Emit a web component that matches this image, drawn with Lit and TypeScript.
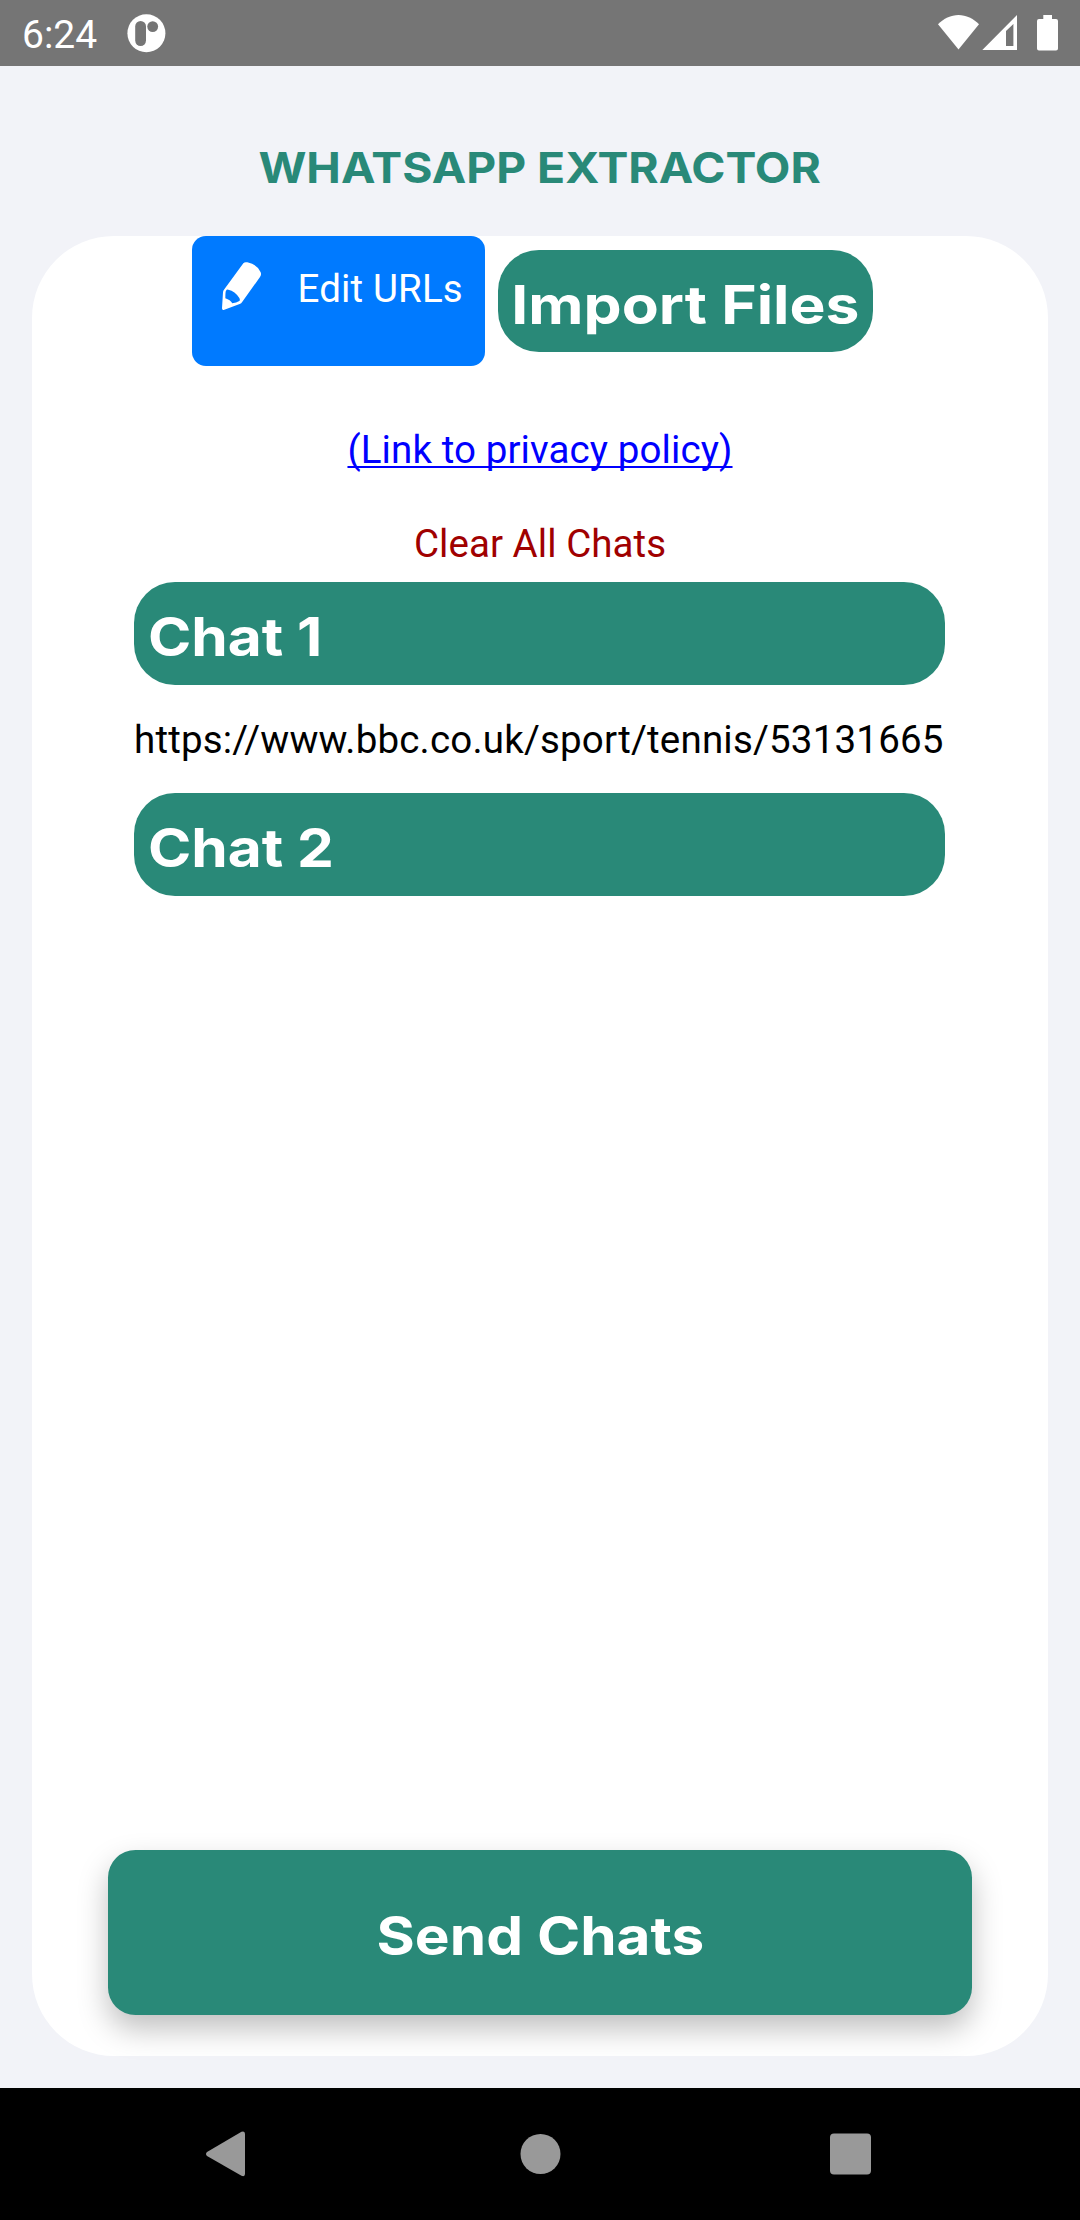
import { LitElement, html, css } from "lit";
import { customElement, property, state } from "lit/decorators.js";

interface Chat {
  name: string;
  urls: string[];
}

@customElement("status-bar")
class StatusBar extends LitElement {
  static styles = css`
    :host {
      display: flex;
      align-items: flex-start;
      justify-content: space-between;
      box-sizing: border-box;
      height: 66px;
      flex: none;
      background: #757575;
      color: #fff;
    }
    .left {
      display: flex;
      padding-left: 22px;
    }
    .time {
      width: 105px;
      padding-top: 12px;
      font: 39px/46px Roboto, sans-serif;
      white-space: nowrap;
    }
    .app {
      margin-top: 14px;
    }
    .icons {
      display: block;
    }
  `;
  render() {
    return html`
      <div class="left">
        <span class="time">6:24</span>
        <svg class="app" width="39" height="39" viewBox="0 0 39 39">
          <circle cx="19.4" cy="19.3" r="19" fill="#fff" />
          <rect x="8.2" y="7" width="10.8" height="25" rx="5.4" fill="#757575" />
          <circle cx="25.7" cy="12.6" r="5.4" fill="#757575" />
        </svg>
      </div>
      <svg class="icons" width="150" height="66" viewBox="930 0 150 66" fill="#fff">
        <path d="M958.5 49.5 938 24.3C943.500 18.500 951 15 958.500 15S973.500 18.500 979 24.300Z" />
        <path fill-rule="evenodd" d="M982.300 50 1017 15V50ZM1006 31V46H1013.400V24Z" />
        <path d="M1043.300 15H1052V19H1056Q1058 19 1058 21V48.500Q1058 50.500 1056 50.500H1039Q1037 50.500 1037 48.500V21Q1037 19 1039 19H1043.300Z" />
      </svg>
    `;
  }
}

@customElement("chat-item")
class ChatItem extends LitElement {
  @property({ attribute: false }) chat!: Chat;
  static styles = css`
    :host {
      display: block;
    }
    .name {
      box-sizing: border-box;
      height: 103px;
      padding: 23px 0 0 13.5px;
      border-radius: 41px;
      background: #298978;
      color: #fff;
      font: 700 53px/64px Inter, sans-serif;
      white-space: nowrap;
    }
    .name span {
      display: inline-block;
      transform: scaleX(1.105);
      transform-origin: left;
    }
    .url {
      padding: 32px 0 30px;
      color: #000;
      font: 38.5px/46px Roboto, sans-serif;
      letter-spacing: 0.19px;
      white-space: nowrap;
    }
  `;
  render() {
    return html`
      <div class="name"><span>${this.chat.name}</span></div>
      ${this.chat.urls.map((u) => html`<div class="url">${u}</div>`)}
    `;
  }
}

@customElement("nav-bar")
class NavBar extends LitElement {
  static styles = css`
    :host {
      display: flex;
      align-items: center;
      justify-content: space-between;
      box-sizing: border-box;
      height: 132px;
      flex: none;
      padding: 0 208px 0 205px;
      background: #000;
    }
    svg {
      overflow: visible;
    }
  `;
  render() {
    return html`
      <svg width="42" height="48" viewBox="0 0 42 48" fill="#999">
        <path d="M2 22 36.500 1.800Q40 0.500 40 4V44Q40 47 36.500 45.800L2 26Q0 24 2 22Z" />
      </svg>
      <svg width="42" height="42" viewBox="0 0 42 42" fill="#999"><circle cx="22.500" cy="21" r="20" /></svg>
      <svg width="42" height="42" viewBox="0 0 42 42" fill="#999"><rect x="0" y="0.500" width="41" height="41" rx="4" /></svg>
    `;
  }
}

@customElement("app-root")
class AppRoot extends LitElement {
  @state() private chats: Chat[] = [
    { name: "Chat 1", urls: ["https://www.bbc.co.uk/sport/tennis/53131665"] },
    { name: "Chat 2", urls: [] },
  ];

  static styles = css`
    :host {
      display: flex;
      flex-direction: column;
      width: 1080px;
      height: 2220px;
      overflow: hidden;
      background: #f2f3f8;
      font-family: Roboto, sans-serif;
    }
    .title {
      box-sizing: border-box;
      height: 170px;
      flex: none;
      margin: 0;
      padding-top: 75px;
      color: #298978;
      text-align: center;
      font: 700 43px/52px Inter, sans-serif;
      white-space: nowrap;
    }
    .title span,
    .import span,
    .send span {
      display: inline-block;
    }
    .title span {
      transform: scaleX(1.075);
    }
    .card {
      display: flex;
      flex-direction: column;
      align-items: center;
      flex: 1;
      min-height: 0;
      margin: 0 32px 32px;
      border-radius: 82px;
      background: #fff;
    }
    .actions {
      display: flex;
      align-self: stretch;
      padding-left: 160px;
      gap: 13px;
    }
    button {
      margin: 0;
      border: 0;
      color: #fff;
      white-space: nowrap;
    }
    .edit {
      display: flex;
      align-items: flex-start;
      box-sizing: border-box;
      width: 293px;
      height: 130px;
      padding: 24px 0 0 28px;
      border-radius: 14px;
      background: #007aff;
      font: 38.5px/46px Roboto, sans-serif;
    }
    .edit span {
      margin: 6px 0 0 31.5px;
      letter-spacing: 0.15px;
    }
    .import {
      box-sizing: border-box;
      width: 375px;
      height: 102px;
      margin-top: 14px;
      padding: 8px 0 0;
      border-radius: 41px;
      background: #298978;
      font: 700 53px/64px Inter, sans-serif;
    }
    .import span {
      transform: scaleX(1.142);
    }
    .policy {
      margin-top: 61px;
      color: #00f;
      font-size: 38.5px;
      line-height: 46px;
      letter-spacing: 0.1px;
      text-decoration: underline 2px;
      text-decoration-skip-ink: none;
      text-underline-offset: 3px;
    }
    .clear {
      margin: 48px 0 15px;
      color: #a00000;
      font-size: 38.5px;
      line-height: 46px;
      letter-spacing: 0.05px;
    }
    .chats {
      display: flex;
      flex-direction: column;
      width: 811px;
      margin-right: 1px;
    }
    .send {
      box-sizing: border-box;
      width: 864px;
      height: 165px;
      margin: auto 0 41px;
      padding: 6px 0 0;
      border-radius: 27.5px;
      background: #298978;
      box-shadow: 0 14px 30px rgba(0, 0, 0, 0.25);
      font: 700 53px/64px Inter, sans-serif;
    }
    .send span {
      transform: scaleX(1.104);
    }
  `;

  render() {
    return html`
      <status-bar></status-bar>
      <h1 class="title"><span>WHATSAPP EXTRACTOR</span></h1>
      <main class="card">
        <div class="actions">
          <button class="edit">
            <svg width="46" height="52" viewBox="120 120 138 156" fill="#fff">
              <path
                fill-rule="evenodd"
                d="M190 130Q194 125 202 127Q232 133 242 157Q245 164 240 171L187 245Q184 250 179 252L131 270Q126 271 126 265L129 217Q129 213 133 208ZM138 212Q136 215 136 235Q151 240 157 250Q169 249 178 243Q181 240 178 234Q165 213 145 209Q140 208 138 212Z"
              />
            </svg>
            <span>Edit URLs</span>
          </button>
          <button class="import"><span>Import Files</span></button>
        </div>
        <a class="policy">(Link to privacy policy)</a>
        <div class="clear">Clear All Chats</div>
        <div class="chats">${this.chats.map((c) => html`<chat-item .chat=${c}></chat-item>`)}</div>
        <button class="send"><span>Send Chats</span></button>
      </main>
      <nav-bar></nav-bar>
    `;
  }
}
